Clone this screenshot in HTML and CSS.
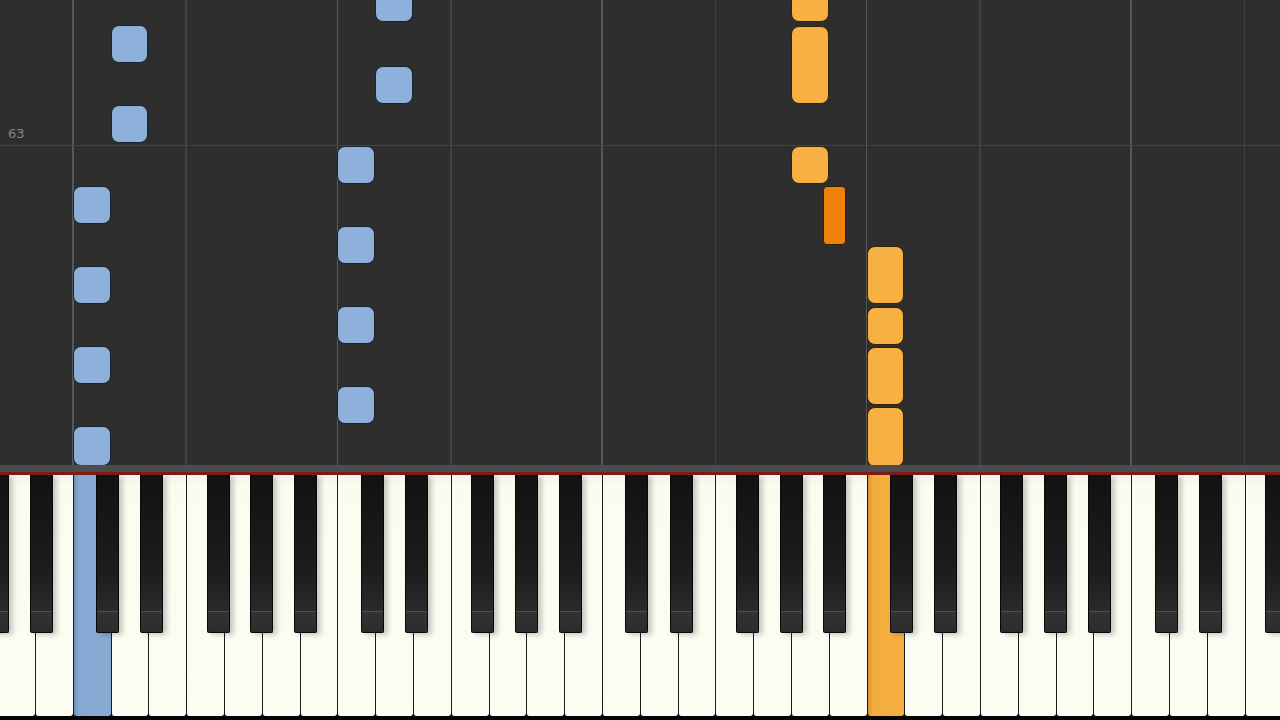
FILE: index.html
```html
<!DOCTYPE html>
<html>
<head>
<meta charset="utf-8">
<title>Piano Roll</title>
<link rel="stylesheet" href="styles.css">
</head>
<body>
<div class="app">
  <div class="roll">
    <div class="vline c" style="left:72.8px"></div>
    <div class="vline f" style="left:186.2px"></div>
    <div class="vline c" style="left:337.4px"></div>
    <div class="vline f" style="left:450.8px"></div>
    <div class="vline c" style="left:602px"></div>
    <div class="vline f" style="left:715.4px"></div>
    <div class="vline c" style="left:866.6px"></div>
    <div class="vline f" style="left:980px"></div>
    <div class="vline c" style="left:1131.2px"></div>
    <div class="vline f" style="left:1244.6px"></div>
    <div class="hline"></div>
    <div class="label">63</div>

    <div class="note blue" style="left:110.6px;top:25px;height:38px"></div>
    <div class="note blue" style="left:110.6px;top:105px;height:38px"></div>
    <div class="note blue" style="left:72.8px;top:186px;height:38px"></div>
    <div class="note blue" style="left:72.8px;top:266px;height:38px"></div>
    <div class="note blue" style="left:72.8px;top:346px;height:38px"></div>
    <div class="note blue" style="left:72.8px;top:426px;height:40px"></div>

    <div class="note blue" style="left:375.2px;top:-16px;height:38px"></div>
    <div class="note blue" style="left:375.2px;top:66px;height:38px"></div>
    <div class="note blue" style="left:337.4px;top:146px;height:38px"></div>
    <div class="note blue" style="left:337.4px;top:226px;height:38px"></div>
    <div class="note blue" style="left:337.4px;top:306px;height:38px"></div>
    <div class="note blue" style="left:337.4px;top:386px;height:38px"></div>

    <div class="note orange" style="left:791px;top:-16px;height:38px"></div>
    <div class="note orange" style="left:791px;top:26px;height:78px"></div>
    <div class="note orange" style="left:791px;top:146px;height:38px"></div>
    <div class="note dark" style="left:823.3px;top:186px;height:59px"></div>
    <div class="note orange" style="left:866.6px;top:246px;height:58px"></div>
    <div class="note orange" style="left:866.6px;top:307px;height:38px"></div>
    <div class="note orange" style="left:866.6px;top:347px;height:58px"></div>
    <div class="note orange" style="left:866.6px;top:407px;height:60px"></div>
  </div>
  <div class="bar"></div>
  <div class="keyboard">
    <div class="whites">
      <div class="wk"></div><div class="wk"></div><div class="wk on-blue"></div><div class="wk"></div><div class="wk"></div><div class="wk"></div><div class="wk"></div>
      <div class="wk"></div><div class="wk"></div><div class="wk"></div><div class="wk"></div><div class="wk"></div><div class="wk"></div><div class="wk"></div>
      <div class="wk"></div><div class="wk"></div><div class="wk"></div><div class="wk"></div><div class="wk"></div><div class="wk"></div><div class="wk"></div>
      <div class="wk"></div><div class="wk"></div><div class="wk on-orange"></div><div class="wk"></div><div class="wk"></div><div class="wk"></div><div class="wk"></div>
      <div class="wk"></div><div class="wk"></div><div class="wk"></div><div class="wk"></div><div class="wk"></div><div class="wk"></div>
    </div>
    <div class="bk" style="left:-14.3px"></div>
    <div class="bk" style="left:29.5px"></div>
    <div class="bk" style="left:96.1px"></div>
    <div class="bk" style="left:140.4px"></div>
    <div class="bk" style="left:206.5px"></div>
    <div class="bk" style="left:250.3px"></div>
    <div class="bk" style="left:294.1px"></div>
    <div class="bk" style="left:360.7px"></div>
    <div class="bk" style="left:405px"></div>
    <div class="bk" style="left:471.1px"></div>
    <div class="bk" style="left:514.9px"></div>
    <div class="bk" style="left:558.7px"></div>
    <div class="bk" style="left:625.3px"></div>
    <div class="bk" style="left:669.6px"></div>
    <div class="bk" style="left:735.7px"></div>
    <div class="bk" style="left:779.5px"></div>
    <div class="bk" style="left:823.3px"></div>
    <div class="bk" style="left:889.9px"></div>
    <div class="bk" style="left:934.2px"></div>
    <div class="bk" style="left:1000.3px"></div>
    <div class="bk" style="left:1044.1px"></div>
    <div class="bk" style="left:1087.9px"></div>
    <div class="bk" style="left:1154.5px"></div>
    <div class="bk" style="left:1198.8px"></div>
    <div class="bk" style="left:1264.9px"></div>
  </div>
</div>
</body>
</html>
```

FILE: styles.css
```css
html, body {
  margin: 0;
  padding: 0;
  background: #000;
  overflow: hidden;
}

.app {
  width: 1280px;
  height: 720px;
  display: flex;
  flex-direction: column;
  overflow: hidden;
}

.roll {
  position: relative;
  height: 465px;
  flex: 0 0 465px;
  background: #2e2e2e;
  overflow: hidden;
}

.vline {
  position: absolute;
  top: 0;
  bottom: 0;
  width: 1.5px;
  margin-left: -0.75px;
}
.vline.c { background: #575757; }
.vline.f { background: #424242; }

.hline {
  position: absolute;
  left: 0;
  right: 0;
  top: 145px;
  height: 1px;
  background: #434343;
}

.label {
  position: absolute;
  left: 8px;
  top: 126px;
  font-family: "DejaVu Sans", sans-serif;
  font-size: 13px;
  color: #858585;
}

.note {
  position: absolute;
  width: 37.8px;
  box-sizing: border-box;
  border-radius: 8px;
  border: 1.5px solid rgba(10, 10, 10, 0.6);
}
.note.blue { background: #8db1da; border-color: #1b2330; }
.note.orange { background: #f7b143; border-color: #35220a; }
.note.dark { width: 23px; border-radius: 4px; background: #f0820c; border-color: #351c05; }

.bar {
  flex: 0 0 7px;
  background: #4c4c4c;
  border-bottom: 3px solid #7c1a1a;
}

.keyboard {
  position: relative;
  flex: 1 1 auto;
  background: #050505;
  overflow: hidden;
}

.whites {
  display: flex;
  margin-left: -2.8px;
  height: 241px;
}

.wk {
  flex: 0 0 37.8px;
  box-sizing: border-box;
  height: 241px;
  background: linear-gradient(to bottom, #f4f2e6 0px, #fcfbf0 12px, #fdfcf2 100%);
  border-left: 1.5px solid #1c1c1c;
  border-radius: 0 0 3px 3px;
}
.wk.on-blue {
  background: linear-gradient(to right, #6d8fb7 0px, #86a9d3 5px, #88abd4 100%);
}
.wk.on-orange {
  background: linear-gradient(to right, #d9922b 0px, #f3ac3d 5px, #f5ae40 100%);
}

.bk {
  position: absolute;
  top: 0;
  width: 23px;
  height: 158px;
  box-sizing: border-box;
  border: 1px solid #080808;
  border-top: none;
  background:
    linear-gradient(to bottom, transparent 0, transparent 136px, #4e4e4e 136px, #4e4e4e 137px, #333 137px, #2c2c2c 100%),
    linear-gradient(to bottom, #121212 0%, #1c1c1c 60%, #2a2a2a 86%);
  border-radius: 0 0 2px 2px;
  box-shadow: 4px 2px 5px rgba(0, 0, 0, 0.2);
}
```
